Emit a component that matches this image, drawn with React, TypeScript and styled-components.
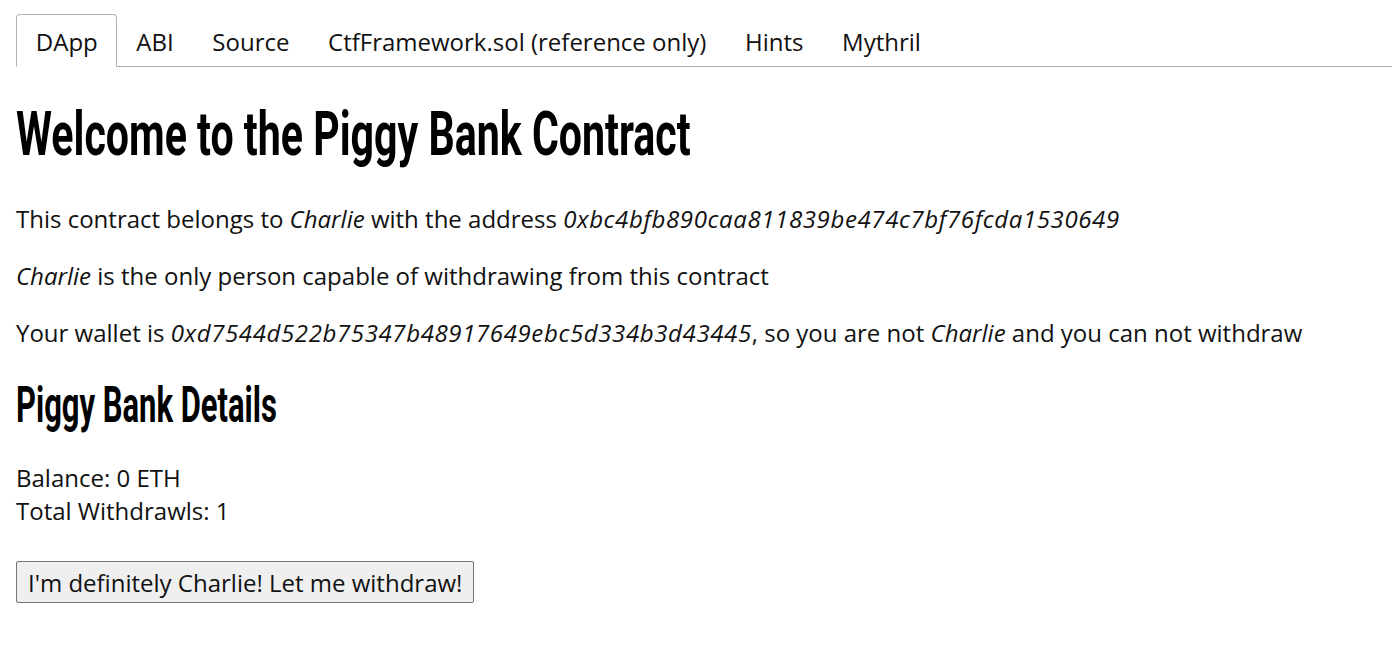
import React from "react";
import styled, { createGlobalStyle } from "styled-components";

const Global = createGlobalStyle`
  html, body { margin: 0; padding: 0; background: #fff; }
  body {
    font-family: "Open Sans", "Noto Sans", sans-serif;
    font-size: 24px;
    line-height: normal;
    color: #111;
  }
`;

const Page = styled.div`
  padding: 14px 0 0 16px;
`;

const TabBar = styled.ul`
  display: flex;
  list-style: none;
  margin: 0;
  padding: 0;
  border-bottom: 1px solid #aaa;
`;

const Tab = styled.li<{ $active?: boolean }>`
  padding: 10px 17.8px 8px 18.8px;
  margin-bottom: -1px;
  border: 1px solid ${(p) => (p.$active ? "#b5b5b5" : "transparent")};
  border-bottom-color: ${(p) => (p.$active ? "#fff" : "transparent")};
  border-radius: 4px 4px 0 0;
  background: ${(p) => (p.$active ? "#fff" : "transparent")};
  font-size: 24px;
  color: #111;
`;

const Content = styled.div`
  padding-top: 30px;
`;

const Heading = styled.h1<{ $size: number; $scale: number }>`
  font-family: "Roboto", "Liberation Sans", sans-serif;
  font-weight: 700;
  font-size: ${(p) => p.$size}px;
  line-height: 1.2;
  margin: 0;
  color: #000;
  transform: scaleX(${(p) => p.$scale});
  transform-origin: left center;
  white-space: nowrap;
`;

const TitleBlock = styled.div`
  margin-bottom: 31px;
`;

const SubBlock = styled.div`
  margin: 26px 0 26px;
`;

const Para = styled.p`
  margin: 0 0 24px;
`;

const Address = styled.em`
  letter-spacing: 0.62px;
`;

const Details = styled.div`
  margin-bottom: 34px;
`;

const Button = styled.button`
  font-family: "Open Sans", sans-serif;
  font-size: 24px;
  line-height: normal;
  color: #111;
  background: #efefef;
  border: 1px solid #767676;
  border-radius: 2px;
  padding: 4px 11px 3px;
`;

export default function App() {
  return (
    <>
      <Global />
      <Page>
        <TabBar>
          <Tab $active>DApp</Tab>
          <Tab>ABI</Tab>
          <Tab>Source</Tab>
          <Tab>CtfFramework.sol (reference only)</Tab>
          <Tab>Hints</Tab>
          <Tab>Mythril</Tab>
        </TabBar>
        <Content>
          <TitleBlock>
            <Heading $size={62} $scale={0.663}>Welcome to the Piggy Bank Contract</Heading>
          </TitleBlock>
          <Para>
            This contract belongs to <em>Charlie</em> with the address{" "}
            <Address>0xbc4bfb890caa811839be474c7bf76fcda1530649</Address>
          </Para>
          <Para>
            <em>Charlie</em> is the only person capable of withdrawing from this contract
          </Para>
          <Para>
            Your wallet is <Address>0xd7544d522b75347b48917649ebc5d334b3d43445</Address>, so you are not{" "}
            <em>Charlie</em> and you can not withdraw
          </Para>
          <SubBlock>
            <Heading as="h2" $size={50} $scale={0.619}>Piggy Bank Details</Heading>
          </SubBlock>
          <Details>
            <div>Balance: 0 ETH</div>
            <div>Total Withdrawls: 1</div>
          </Details>
          <Button>I'm definitely Charlie! Let me withdraw!</Button>
        </Content>
      </Page>
    </>
  );
}
